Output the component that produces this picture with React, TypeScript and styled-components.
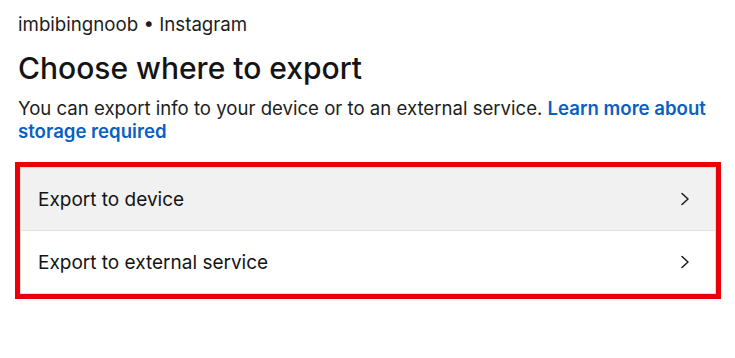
import * as React from "react";
import styled, { createGlobalStyle } from "styled-components";

const GlobalStyle = createGlobalStyle`
  body {
    margin: 0;
    background: #ffffff;
    font-family: Inter, "Noto Sans", sans-serif;
    color: #1c1e21;
  }
`;

const SPage = styled.div`
  padding: 13px 18px 0 18px;
  width: 735px;
  box-sizing: border-box;
`;

const SAccount = styled.div`
  font-size: 18.7px;
  line-height: 24px;
  color: #1c1e21;
`;

const STitle = styled.h1`
  margin: 13px 0 0 0;
  font-size: 30px;
  line-height: 36px;
  font-weight: 500;
  color: #141414;
`;

const SDescription = styled.p`
  margin: 11px 0 0 0;
  font-size: 18.6px;
  line-height: 23px;
  color: #1c1e21;
`;

const SLink = styled.a`
  color: #0a5fc4;
  font-weight: 600;
  text-decoration: none;
`;

const SHighlight = styled.div`
  margin: 19px 0 0 -3px;
  width: 706px;
  box-sizing: border-box;
  border: 5px solid #e8000b;
`;

const SCard = styled.div`
  display: flex;
  flex-direction: column;
  border: 1px solid #dcdcdc;
`;

interface IRowProps {
  shaded?: boolean;
}

const SRow = styled.div<IRowProps>`
  display: flex;
  align-items: center;
  justify-content: space-between;
  height: 62px;
  padding: 0 24px 0 17px;
  background: ${(props) => (props.shaded ? "#f1f1f1" : "#ffffff")};
  & + & {
    border-top: 1px solid #e0e0e0;
  }
`;

const SRowLabel = styled.span`
  font-size: 19px;
  color: #141414;
`;

const Chevron = () => (
  <svg width="12" height="14" viewBox="0 0 12 14" fill="none">
    <path
      d="M3 1.5 L9 7 L3 12.5"
      stroke="#1c1e21"
      strokeWidth="1.6"
      strokeLinecap="round"
      strokeLinejoin="round"
    />
  </svg>
);

const App = () => {
  const options = ["Export to device", "Export to external service"];
  return (
    <>
      <GlobalStyle />
      <SPage>
        <SAccount>imbibingnoob • Instagram</SAccount>
        <STitle>Choose where to export</STitle>
        <SDescription>
          You can export info to your device or to an external service.{" "}
          <SLink href="#">Learn more about storage required</SLink>
        </SDescription>
        <SHighlight>
          <SCard>
            {options.map((label, index) => (
              <SRow key={label} shaded={index === 0}>
                <SRowLabel>{label}</SRowLabel>
                <Chevron />
              </SRow>
            ))}
          </SCard>
        </SHighlight>
      </SPage>
    </>
  );
};

export default App;
